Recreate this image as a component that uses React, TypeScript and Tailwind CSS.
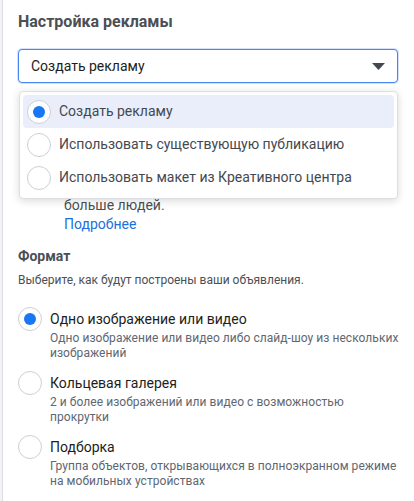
import React from "react";

function Radio({ checked }: { checked?: boolean }) {
  return (
    <span className="flex h-6 w-6 shrink-0 items-center justify-center rounded-full border border-[#ccd0d5] bg-white">
      {checked && <span className="h-3 w-3 rounded-full bg-[#1877f2]" />}
    </span>
  );
}

const menuItems = [
  { label: "Создать рекламу", checked: true },
  { label: "Использовать существующую публикацию" },
  { label: "Использовать макет из Креативного центра" },
];

const formats = [
  {
    title: "Одно изображение или видео",
    desc: ["Одно изображение или видео либо слайд-шоу из нескольких", "изображений"],
    checked: true,
  },
  {
    title: "Кольцевая галерея",
    desc: ["2 и более изображений или видео с возможностью", "прокрутки"],
  },
  {
    title: "Подборка",
    desc: ["Группа объектов, открывающихся в полноэкранном режиме", "на мобильных устройствах"],
  },
];

export default function App() {
  return (
    <div className="h-[501px] w-[414px] overflow-hidden bg-[#f2f3f5] pl-[2px] font-['Roboto',sans-serif]">
      <div className="h-full border-l border-[#dddfe2] bg-white pl-[15px] pr-[16px] pt-3">
        <h2 className="text-[16px] font-bold leading-5 text-[#4b4f56]">Настройка рекламы</h2>

        <div className="relative mt-[17px]">
          <div className="flex h-[34px] items-center justify-between rounded-[4px] border border-[#4a86f0] bg-white pl-[12px] pr-[12px] shadow-[0_0_0_1px_rgba(74,134,240,0.25)]">
            <span className="text-[14px] text-[#1c1e21]">Создать рекламу</span>
            <svg width="13" height="7" viewBox="0 0 13 7" className="mt-[1px]">
              <path d="M0 0 H13 L6.5 7 Z" fill="#444950" />
            </svg>
          </div>

          <div className="absolute left-[1px] right-0 top-[42px] z-10 rounded-[4px] border border-[#dddfe2] bg-white px-[3px] pb-[4px] pt-[3px] shadow-[0_2px_8px_rgba(0,0,0,0.15)]">
            {menuItems.map((it) => (
              <div
                key={it.label}
                className={`flex h-[33px] items-center gap-2 rounded-[4px] pl-[4px] ${it.checked ? "bg-[#e9eefa]" : ""}`}
              >
                <Radio checked={it.checked} />
                <span className="text-[14px] text-[#444950]">{it.label}</span>
              </div>
            ))}
          </div>

          <div className="pl-[46px] pt-[113px] text-[14px] leading-[19px]">
            <div className="text-[#4b4f56]">больше людей.</div>
            <div className="text-[#216fdb]">Подробнее</div>
          </div>
        </div>

        <div className="mt-[12px] text-[14px] font-bold leading-5 text-[#4b4f56]">Формат</div>
        <div className="mt-[6px] text-[12px] leading-4 text-[#4b4f56]">
          Выберите, как будут построены ваши объявления.
        </div>

        <div className="mt-[19px] flex flex-col gap-[10px]">
          {formats.map((f) => (
            <div key={f.title} className="flex gap-2">
              <Radio checked={f.checked} />
              <div className="flex flex-col">
                <span className="whitespace-nowrap text-[14px] leading-6 text-[#1c1e21]">{f.title}</span>
                <span className="whitespace-nowrap text-[12px] leading-[15px] tracking-[0.05px] text-[#606770]">
                  {f.desc[0]}
                  <br />
                  {f.desc[1]}
                </span>
              </div>
            </div>
          ))}
        </div>
      </div>
    </div>
  );
}
